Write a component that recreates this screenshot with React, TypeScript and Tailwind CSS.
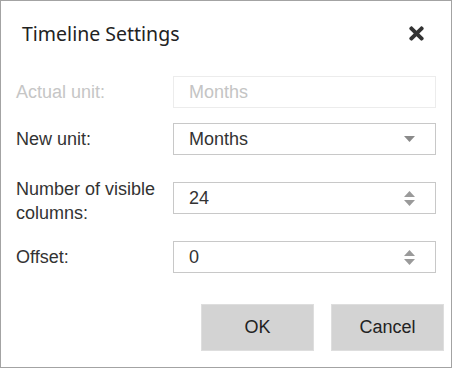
import { FaTimes } from 'react-icons/fa';

const Spinner = () => (
    <div className="flex flex-col items-center gap-[3px]">
        <svg width="11" height="6" viewBox="0 0 11 6">
            <path d="M0 6 L5.5 0 L11 6 Z" fill="#9a9a9a" />
        </svg>
        <svg width="11" height="6" viewBox="0 0 11 6">
            <path d="M0 0 L5.5 6 L11 0 Z" fill="#9a9a9a" />
        </svg>
    </div>
);

const Caret = () => (
    <svg width="11" height="6" viewBox="0 0 11 6">
        <path d="M0 0 L5.5 6 L11 0 Z" fill="#8a8a8a" />
    </svg>
);

const Field = ({ value, disabled, right }: { value: string; disabled?: boolean; right?: React.ReactNode }) => (
    <div
        className={`flex h-[32px] w-[263px] shrink-0 items-center justify-between border pl-[15px] pr-[20px] ${
            disabled ? 'border-[#ececec] text-[#c4c4c4]' : 'border-[#c8c8c8] text-[#333]'
        }`}
    >
        <span>{value}</span>
        {right}
    </div>
);

export default function App() {
    const rows = [
        { label: 'Actual unit:', value: 'Months', disabled: true, mt: 'mt-0' },
        { label: 'New unit:', value: 'Months', right: <Caret />, mt: 'mt-[15px]' },
    ];

    return (
        <div className="flex h-[368px] w-[452px] flex-col border border-[#a3a3a3] bg-white font-['Liberation_Sans',Arial,sans-serif] text-[18px]">
            <div className="flex h-[65px] items-center justify-between pl-[21px] pr-[24px]">
                <h2 className="font-['Noto_Sans',sans-serif] text-[19.5px] text-[#222]">Timeline Settings</h2>
                <FaTimes className="text-[#333]" size={21} />
            </div>

            <div className="mt-[10px] flex flex-col px-[15px]">
                {rows.map(row => (
                    <div key={row.label} className={`flex items-center ${row.mt}`}>
                        <span className={`w-[157px] ${row.disabled ? 'text-[#c6c6c6]' : 'text-[#333]'}`}>{row.label}</span>
                        <Field value={row.value} disabled={row.disabled} right={row.right} />
                    </div>
                ))}

                <div className="mt-[27px] flex h-[32px] items-start">
                    <span className="mt-[-5px] w-[157px] leading-[24px] text-[#333]">
                        Number of visible
                        <br />
                        columns:
                    </span>
                    <Field value="24" right={<Spinner />} />
                </div>

                <div className="mt-[27px] flex items-center">
                    <span className="w-[157px] text-[#333]">Offset:</span>
                    <Field value="0" right={<Spinner />} />
                </div>
            </div>

            <div className="mt-[31px] flex justify-end gap-[17px] pr-[7px]">
                <button className="h-[47px] w-[113px] border border-[#dedede] bg-[#d3d3d3] text-[#222]">OK</button>
                <button className="h-[47px] w-[113px] border border-[#dedede] bg-[#d3d3d3] text-[#222]">Cancel</button>
            </div>
        </div>
    );
}
